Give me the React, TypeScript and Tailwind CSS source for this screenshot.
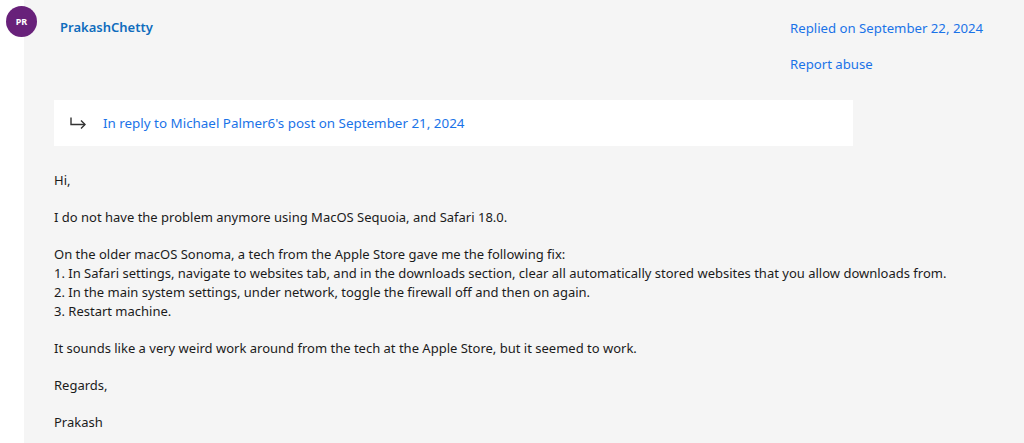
import React from 'react';

const font = { fontFamily: '"Noto Sans", "Open Sans", sans-serif' };

const ReplyArrow: React.FC = () => (
  <svg width="17" height="12" viewBox="0 0 17 12" fill="none" stroke="#333" strokeWidth="1.4">
    <path d="M1 0.5 V7.5 H15" />
    <path d="M11 3.5 L15 7.5 L11 11.5" />
  </svg>
);

const App: React.FC = () => {
  return (
    <div className="relative w-[1024px] h-[443px] bg-white overflow-hidden" style={font}>
      {/* avatar sits over the panel edge */}
      <div className="absolute left-[6px] top-[6px] w-[31px] h-[31px] rounded-full bg-[#68217a] flex items-center justify-center text-white text-[9px] font-bold">
        PR
      </div>

      <div className="ml-[24px] h-full bg-[#f5f5f5] pl-[30px] pr-[20px]">
        {/* header */}
        <div className="flex justify-between pt-[17px] h-[100px]">
          <div className="pl-[6px] text-[13px] font-semibold text-[#0f6cbd] leading-[20px]">PrakashChetty</div>
          <div className="w-[214px] text-[13.2px] text-[#1a73e8] leading-[20px] whitespace-nowrap">
            <div className="mt-[1px]">Replied on September 22, 2024</div>
            <div className="mt-[16px]">Report abuse</div>
          </div>
        </div>

        {/* in reply to */}
        <div className="w-[799px] h-[46px] bg-white flex items-center pl-[16px]">
          <ReplyArrow />
          <span className="ml-[16px] text-[13.4px] text-[#1a73e8]">
            In reply to Michael Palmer6's post on September 21, 2024
          </span>
        </div>

        {/* body */}
        <div className="mt-[25px] text-[13px] leading-[19px] text-[#1b1b1b]">
          <p className="mb-[18px]">Hi,</p>
          <p className="mb-[18px]">I do not have the problem anymore using MacOS Sequoia, and Safari 18.0.</p>
          <p className="mb-[18px]">
            On the older macOS Sonoma, a tech from the Apple Store gave me the following fix:
            <br />
            1. In Safari settings, navigate to websites tab, and in the downloads section, clear all automatically stored websites that you allow downloads from.
            <br />
            2. In the main system settings, under network, toggle the firewall off and then on again.
            <br />
            3. Restart machine.
          </p>
          <p className="mb-[18px]">It sounds like a very weird work around from the tech at the Apple Store, but it seemed to work.</p>
          <p className="mb-[18px]">Regards,</p>
          <p>Prakash</p>
        </div>
      </div>
    </div>
  );
};

export default App;
